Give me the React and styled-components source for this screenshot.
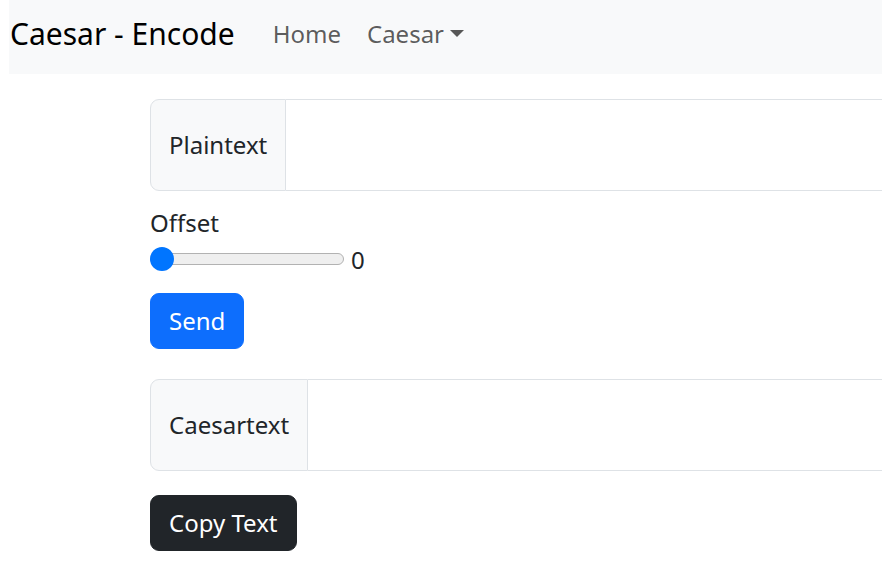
import React, { useState } from "react";
import styled, { createGlobalStyle } from "styled-components";

const GlobalStyle = createGlobalStyle`
  body {
    margin: 0;
    background: #fff;
    color: #212529;
    font-family: "Noto Sans", "Open Sans", sans-serif;
    font-size: 24px;
    line-height: 1.5;
    overflow: hidden;
  }
  * { box-sizing: border-box; }
`;

const Page = styled.div`
  padding-left: 9px;
  width: 900px;
`;

const Navbar = styled.nav`
  display: flex;
  align-items: center;
  height: 74px;
  background: #f8f9fa;
  padding: 0 1px 7px;
`;

const Brand = styled.a`
  font-size: 30px;
  line-height: 1;
  color: #000;
  margin-right: 25px;
`;

const NavLink = styled.a`
  color: rgba(0, 0, 0, 0.65);
  padding: 0 13px;
  display: flex;
  align-items: center;
  font-size: 24px;
`;

const Caret = styled.span`
  display: inline-block;
  margin-left: 6px;
  border-top: 7px solid currentColor;
  border-left: 7px solid transparent;
  border-right: 7px solid transparent;
`;

const Main = styled.main`
  padding: 25px 0 0 141px;
  display: flex;
  flex-direction: column;
  align-items: flex-start;
`;

const InputGroup = styled.div`
  display: flex;
  width: 760px;
  height: 92px;
  margin-bottom: ${(p) => p.$mb}px;
`;

const GroupText = styled.span`
  display: flex;
  align-items: center;
  padding: 9px 18px;
  background: #f8f9fa;
  border: 1px solid #dee2e6;
  border-radius: 9px 0 0 9px;
  white-space: nowrap;
`;

const TextArea = styled.textarea`
  flex: 1;
  border: 1px solid #dee2e6;
  border-left: none;
  border-radius: 0 9px 9px 0;
  resize: none;
  font: inherit;
  padding: 9px 18px;
  outline: none;
`;

const Label = styled.label`
  display: block;
  line-height: 36px;
`;

const SliderRow = styled.div`
  display: flex;
  align-items: center;
  gap: 7px;
  height: 36px;
  margin-bottom: 16px;
`;

const Range = styled.input`
  -webkit-appearance: none;
  appearance: none;
  width: 194px;
  height: 24px;
  margin: 0;
  background: transparent;

  &::-webkit-slider-runnable-track {
    height: 12px;
    background: #efefef;
    border: 1px solid #b2b2b2;
    border-radius: 6px;
  }
  &::-webkit-slider-thumb {
    -webkit-appearance: none;
    width: 24px;
    height: 24px;
    margin-top: -7px;
    margin-left: -1px;
    border-radius: 50%;
    background: #0075ff;
    border: none;
  }
`;

const Value = styled.span`
  line-height: 36px;
  padding-top: 2px;
`;

const Button = styled.button`
  font: inherit;
  color: #fff;
  background: ${(p) => (p.$dark ? "#212529" : "#0d6efd")};
  border: 1px solid ${(p) => (p.$dark ? "#212529" : "#0d6efd")};
  border-radius: 9px;
  padding: 9px 18px;
  line-height: 36px;
  height: 56px;
  margin-bottom: ${(p) => p.$mb || 0}px;
  cursor: pointer;
`;

export default function App() {
  const [offset, setOffset] = useState(0);
  return (
    <Page>
      <GlobalStyle />
      <Navbar>
        <Brand>Caesar - Encode</Brand>
        <NavLink>Home</NavLink>
        <NavLink>
          Caesar
          <Caret />
        </NavLink>
      </Navbar>
      <Main>
        <InputGroup $mb={14}>
          <GroupText>Plaintext</GroupText>
          <TextArea rows={2} />
        </InputGroup>
        <Label>Offset</Label>
        <SliderRow>
          <Range
            type="range"
            min={0}
            max={25}
            value={offset}
            onChange={(e) => setOffset(e.target.value)}
          />
          <Value>{offset}</Value>
        </SliderRow>
        <Button $mb={30}>Send</Button>
        <InputGroup $mb={24}>
          <GroupText>Caesartext</GroupText>
          <TextArea rows={2} />
        </InputGroup>
        <Button $dark>Copy Text</Button>
      </Main>
    </Page>
  );
}
